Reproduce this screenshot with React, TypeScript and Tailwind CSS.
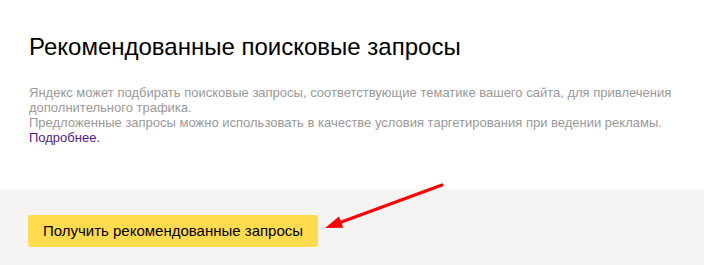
export default function App() {
  return (
    <div className="relative w-[704px] h-[265px] overflow-hidden bg-white font-['Liberation_Sans',Arial,sans-serif]">
      <section className="px-[29px] pt-[33px] pb-[44px]">
        <h1 className="text-[24px] leading-[28px] text-black font-normal">
          Рекомендованные поисковые запросы
        </h1>
        <div className="mt-[24px] text-[13px] leading-[15px] text-[#999]">
          <p>
            Яндекс может подбирать поисковые запросы, соответствующие тематике вашего сайта, для привлечения
            дополнительного трафика.
          </p>
          <p>Предложенные запросы можно использовать в качестве условия таргетирования при ведении рекламы.</p>
          <a href="#" className="text-[#551a8b]">
            Подробнее.
          </a>
        </div>
      </section>

      <section className="bg-[#f5f4f2] px-[28px] pt-[26px] pb-[18px]">
        <button
          type="button"
          className="h-[32px] w-[290px] rounded-[3px] bg-[#ffdb4d] text-[15px] text-black"
        >
          Получить рекомендованные запросы
        </button>
      </section>

      {/* callout arrow */}
      <svg className="pointer-events-none absolute inset-0" width="704" height="265" viewBox="0 0 704 265">
        <line x1="442" y1="185" x2="340" y2="222.5" stroke="#ff0000" strokeWidth="3" strokeLinecap="round" />
        <polygon points="325,228 339,216.5 343.3,227.8" fill="#ff0000" />
      </svg>
    </div>
  );
}
